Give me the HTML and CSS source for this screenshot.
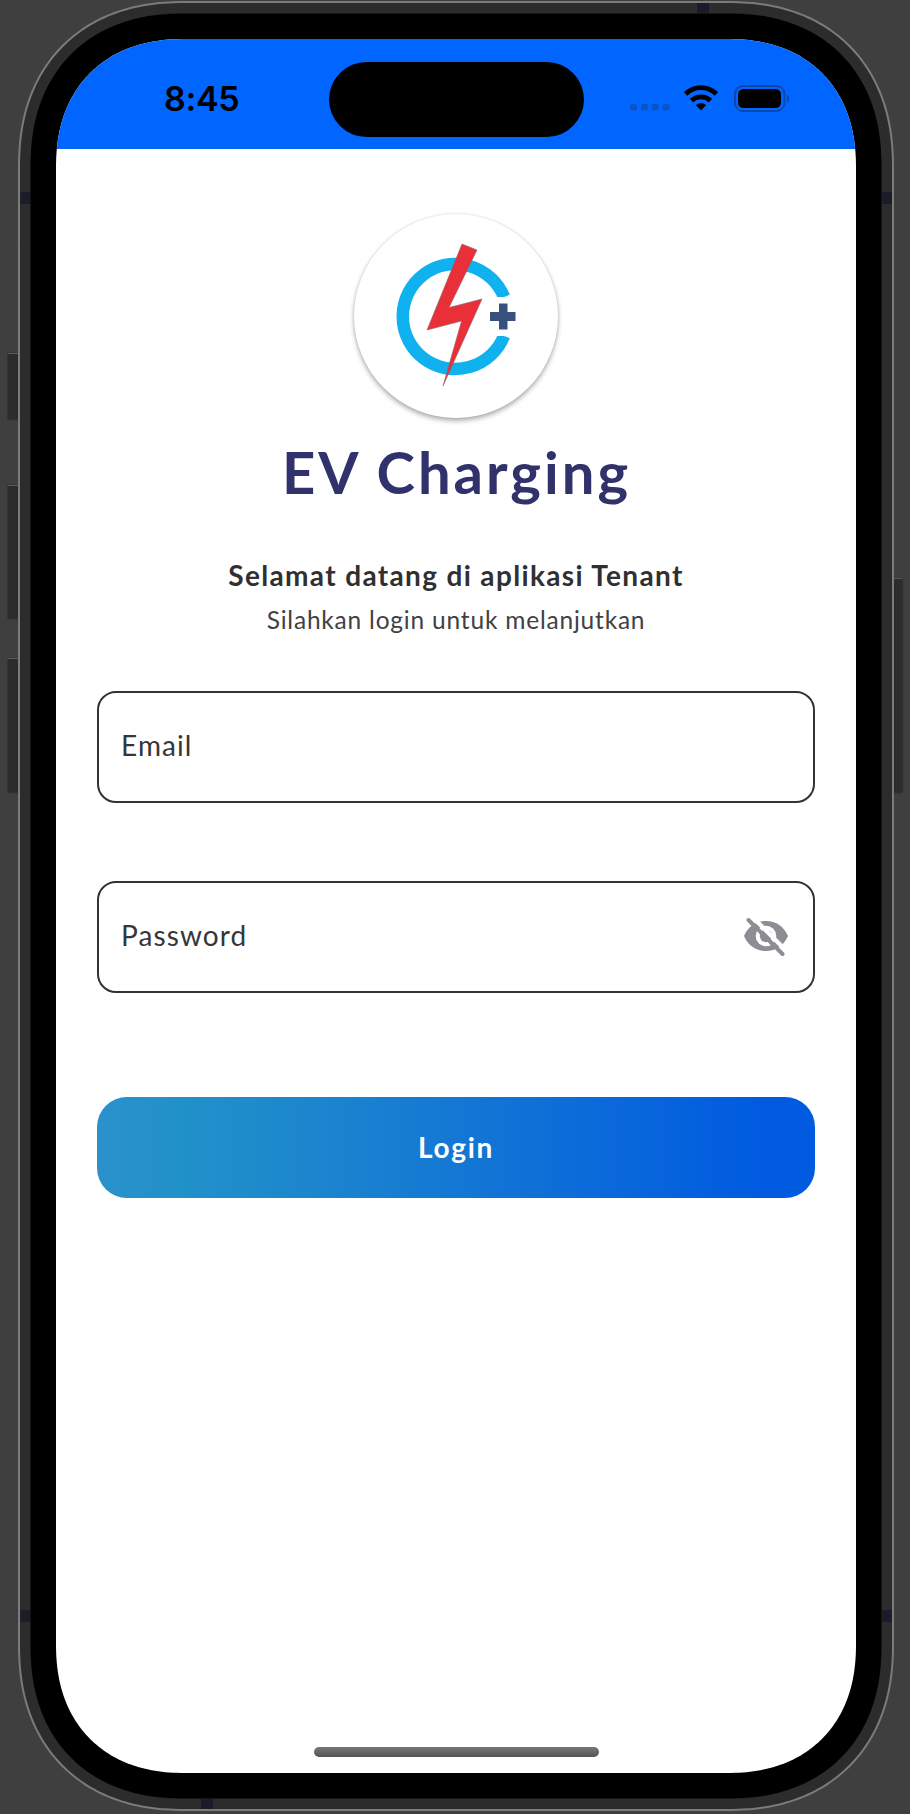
FILE: index.html
```html
<!DOCTYPE html>
<html lang="id">
<head>
<meta charset="utf-8">
<title>EV Charging</title>
<link rel="stylesheet" href="styles.css">
</head>
<body>
<div class="stage">
  <svg class="device" width="910" height="1814" viewBox="0 0 910 1814" aria-hidden="true">
    <g class="side-key">
      <rect x="7.500" y="353" width="14" height="67" rx="2"/>
      <rect x="7.500" y="485" width="14" height="134" rx="2"/>
      <rect x="7.500" y="658" width="14" height="135" rx="2"/>
      <rect x="890" y="578" width="13" height="215" rx="2"/>
    </g>
    <g class="key-shine">
      <path d="M8 353.500h10M8 485.500h10M8 658.500h10M894 578.500h8"/>
    </g>
    <path id="rim" class="rim"/>
    <g class="antenna">
      <rect x="20.500" y="192" width="10" height="12"/>
      <rect x="882" y="192" width="10" height="12"/>
      <rect x="697" y="3" width="12" height="10"/>
      <rect x="20.500" y="1610" width="10" height="12"/>
      <rect x="882" y="1610" width="10" height="12"/>
      <rect x="201" y="1799" width="12" height="10"/>
    </g>
    <path id="bezel" class="bezel"/>
  </svg>

  <div class="screen">
    <header class="status">
      <span class="time">8:45</span>
      <span class="island"></span>
      <span class="indicators">
        <svg class="dots" width="40" height="8" viewBox="0 0 40 8"><g fill="#0a54c6"><rect x="0" y="1" width="7" height="6.500" rx="2"/><rect x="11" y="1" width="7" height="6.500" rx="2"/><rect x="21.700" y="1" width="7" height="6.500" rx="2"/><rect x="32.500" y="1" width="7" height="6.500" rx="2"/></g></svg>
        <svg class="wifi" width="34" height="26" viewBox="0 0 34 26"><g fill="none" stroke="#000" stroke-width="4.800"><path d="M1.600 8.900C10.300.600 23.700.600 32.400 8.900"/><path d="M7.500 15.600C12.900 10.600 21.100 10.600 26.500 15.600"/></g><path d="M12 20.300C14.800 17.200 19.200 17.200 22 20.300L17 25.500Z"/></svg>
        <svg class="battery" width="56" height="27" viewBox="0 0 56 27"><rect x="1" y="1" width="49.500" height="25" rx="8" fill="none" stroke="#0a49a8" stroke-width="2"/><rect x="4" y="4" width="43" height="19" rx="5.500"/><path d="M53 9.500C56 11 56 16 53 17.500Z" fill="#0a49a8"/></svg>
      </span>
    </header>

    <main class="content">
      <div class="logo">
        <svg width="204" height="204" viewBox="354 214 204 204">
          <path d="M504 297A52.500 52.500 0 1 0 504 336" fill="none" stroke="#0fb1ef" stroke-width="12.500"/>
          <path d="M494 297h24v39h-24z" fill="#fff"/>
          <path d="M499 303.500h8.500v8.500h8v9h-8v8.500h-8.500V321h-9v-9h9z" fill="#38507e"/>
          <path d="M462 244L477 250L449 307.500L482 299L443 386L461.500 321L427 330Z" fill="#e92f38" stroke="#8e6870" stroke-width=".6"/>
        </svg>
      </div>
      <h1 class="title">EV Charging</h1>
      <p class="welcome">Selamat datang di aplikasi Tenant</p>
      <p class="hint">Silahkan login untuk melanjutkan</p>
      <div class="field"><span>Email</span></div>
      <div class="field field-password"><span>Password</span>
        <svg class="eye" width="46" height="40" viewBox="0 0 46 40">
          <path d="M1 19C5 9.500 13 4 23 4S41 9.500 45 19C41 28.500 33 34 23 34S5 28.500 1 19Z" fill="#8e8d94"/>
          <circle cx="23" cy="19" r="10.300" fill="#fff"/>
          <circle cx="23" cy="19" r="6.200" fill="#8e8d94"/>
          <path d="M8.500-1L43.500 34" stroke="#fff" stroke-width="4.200"/>
          <path d="M5.500 3L39.500 37" stroke="#8e8d94" stroke-width="4" stroke-linecap="round"/>
        </svg>
      </div>
      <button class="login">Login</button>
    </main>
    <div class="home"></div>
  </div>
</div>
<script src="frame.js"></script>
</body>
</html>
```
FILE: styles.css
```css
* { box-sizing: border-box; }
body { margin: 0; background: #3f3f3f; font-family: Lato, "Open Sans", sans-serif; color: #303032; }
.stage { position: relative; width: 910px; height: 1814px; padding: 39px 54px 41px 56px; overflow: hidden; }
.device { position: absolute; left: 0; top: 0; }
.side-key { fill: #2c2c2c; stroke: #363433; }
.key-shine { fill: none; stroke: #5b5b5b; }
.rim { fill: #2c2c2c; stroke: #7d7b7a; stroke-width: 2; }
.antenna { fill: #191d2a; }
.bezel { fill: #000; }
.screen { position: relative; width: 800px; height: 1734px; background: #fff; display: flex; flex-direction: column; }
.status { height: 110px; background: #06f; display: grid; grid-template-columns: 272.500px 255px 1fr; align-items: start; flex: none; }
.time { padding: 39px 0 0 108px; font: 600 34px/42px Inter, sans-serif; letter-spacing: -.3px; color: #000; }
.island { height: 75px; margin-top: 22.500px; border-radius: 37.500px; background: #000; }
.indicators { display: flex; align-items: flex-start; padding: 46px 0 0 46.500px; }
.dots { margin-top: 18px; }
.wifi { margin-left: 14px; }
.battery { margin-left: 16px; }
.content { display: flex; flex-direction: column; padding: 65px 41px 0; }
.logo { align-self: center; width: 204px; height: 204px; border-radius: 50%; background: #fff; box-shadow: 0 3px 5px rgba(0,0,0,.3), 0 0 3px rgba(0,0,0,.12); }
.title { margin: 16px 0 0; font-size: 58px; line-height: 76px; font-weight: 700; color: #31326b; text-align: center; letter-spacing: 3px; text-indent: 1px; }
.welcome { margin: 46px 0 0; font-size: 28px; line-height: 38px; font-weight: 700; text-align: center; letter-spacing: 1.350px; color: #303032; }
.hint { margin: 8px 0 0; font-size: 24.500px; line-height: 36px; text-align: center; letter-spacing: .8px; color: #414143; }
.field { height: 112px; margin-top: 52.500px; border: 2px solid #333234; border-radius: 19px; display: flex; align-items: center; justify-content: space-between; padding: 0 24px 3px 22px; font-size: 28px; letter-spacing: 1.100px; color: #363638; }
.field-password { margin-top: 78px; }
.eye { margin-top: 3px; }
.login { height: 101px; margin-top: 104.500px; border: 0; border-radius: 30px; background: linear-gradient(90deg, #2b91cd 0%, #2191c9 12%, #1a83cf 34%, #0c6bd9 68%, #005be1 92%, #005be0 100%); color: #fff; font: 700 28px Lato, sans-serif; letter-spacing: 1.700px; padding: 0 0 2px; }
.home { position: absolute; left: 258px; bottom: 16px; width: 285px; height: 10px; border-radius: 5px; background: linear-gradient(#777, #555); }
```
FILE: frame.js
```javascript
// Rounded rectangle whose corners are superellipse arcs.
function smoothRect(x, y, w, h, r) {
  const n = 2.28, steps = 64, arc = [];
  for (let i = 0; i <= steps; i++) {
    const t = (i / steps) * Math.PI / 2;
    arc.push([
      r * (1 - Math.pow(Math.max(0, Math.cos(t)), 2 / n)),
      r * (1 - Math.pow(Math.max(0, Math.sin(t)), 2 / n))
    ]);
  }
  const back = arc.slice().reverse();
  const points = [
    ...arc.map(([a, b]) => [x + a, y + b]),
    ...back.map(([a, b]) => [x + w - a, y + b]),
    ...arc.map(([a, b]) => [x + w - a, y + h - b]),
    ...back.map(([a, b]) => [x + a, y + h - b])
  ];
  return "M" + points.map(p => p[0].toFixed(2) + " " + p[1].toFixed(2)).join("L") + "Z";
}
document.getElementById("rim").setAttribute("d", smoothRect(19, 2, 874, 1808, 167));
document.getElementById("bezel").setAttribute("d", smoothRect(30.5, 13.5, 851, 1785, 155));
document.querySelector(".screen").style.clipPath =
  'path("' + smoothRect(0, 0, 800, 1734, 130) + '")';
```
